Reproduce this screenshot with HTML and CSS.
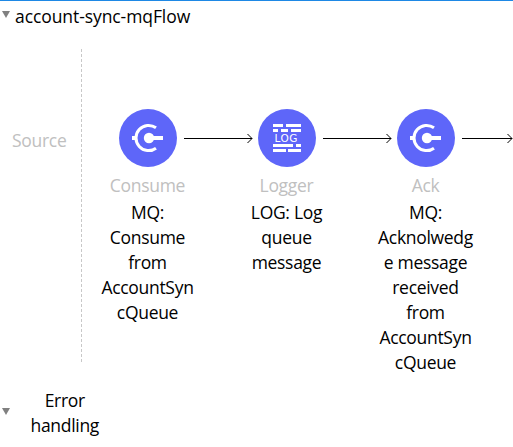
FILE: index.html
```html
<!DOCTYPE html>
<html lang="en">
<head>
<meta charset="utf-8">
<title>account-sync-mqFlow</title>
<link rel="stylesheet" href="styles.css">
</head>
<body>
<svg width="0" height="0" class="defs" aria-hidden="true">
  <symbol id="mq" viewBox="0 0 58 58">
    <circle cx="29" cy="29" r="29" fill="#5e66f9"/>
    <path d="M37 18.8A12.6 12.6 0 1 0 37 39.2" fill="none" stroke="#fff" stroke-width="3"/>
    <circle cx="30" cy="29" r="5.2" fill="#fff"/>
    <path d="M13 27h5v4h-5zM30 27h14v4H30z" fill="#fff"/>
  </symbol>
  <symbol id="arrow" viewBox="0 0 69 12">
    <path d="M0 6.5H68M63.5 2L68 6.5L63.5 11" fill="none" stroke="#000" stroke-width="1"/>
  </symbol>
</svg>
<main class="canvas">
  <header class="flow-head"><span class="caret"></span><h1>account-sync-mqFlow</h1></header>
  <section class="flow">
    <div class="source">Source</div>
    <div class="steps">
      <article class="step">
        <svg class="icon"><use href="#mq"/></svg>
        <h2>Consume</h2>
        <p><span>MQ:</span><span>Consume</span><span>from</span><span>AccountSyn</span><span>cQueue</span></p>
      </article>
      <svg class="arrow"><use href="#arrow"/></svg>
      <article class="step">
        <svg class="icon" viewBox="0 0 58 58">
          <circle cx="29" cy="29" r="29" fill="#5e66f9"/>
          <path d="M15 15h10v3H15zM28 15h15v3H28zM15 20h5v3h-5zM23 20h7v3h-7zM33 20h10v3H33zM15 35h20v3H15zM38 35h5v3h-5zM15 40h13v3H15zM30 40h13v3H30z" fill="#fff"/>
          <text x="16.500" y="33" class="log">LOG</text>
        </svg>
        <h2>Logger</h2>
        <p><span>LOG: Log</span><span>queue</span><span>message</span></p>
      </article>
      <svg class="arrow"><use href="#arrow"/></svg>
      <article class="step">
        <svg class="icon"><use href="#mq"/></svg>
        <h2>Ack</h2>
        <p><span>MQ:</span><span>Acknolwedg</span><span>e message</span><span>received</span><span>from</span><span>AccountSyn</span><span>cQueue</span></p>
      </article>
      <svg class="arrow last" viewBox="0 0 51 12"><path d="M0 6.5H50M45.5 2L50 6.5L45.5 11" fill="none" stroke="#000"/></svg>
    </div>
  </section>
  <footer class="errors"><span class="caret"></span><div>Error<br>handling</div></footer>
</main>
</body>
</html>
```
FILE: styles.css
```css
* { box-sizing: border-box; }
body { margin: 0; background: #fff; color: #000; font: 17.5px/25px "Open Sans", "Noto Sans", sans-serif; letter-spacing: -0.3px; overflow: hidden; }
h1, h2, p { margin: 0; font: inherit; }
.defs { position: absolute; }
.canvas { width: 513px; height: 447px; border-top: 1px solid #1e88e5; display: flex; flex-direction: column; overflow: hidden; }
.caret { width: 8px; height: 7px; background: #808080; clip-path: polygon(0 0, 100% 0, 50% 100%); flex: none; }
.flow-head { height: 48px; padding: 3px 0 0 2px; display: flex; gap: 5px; letter-spacing: -0.08px; }
.flow-head .caret { margin-top: 7px; }
.flow { height: 313px; display: flex; }
.source { width: 82px; padding: 79px 0 0 12px; color: #c0c0c0; background: repeating-linear-gradient(to bottom, #c8c8c8 0 3px, transparent 3px 5px) right / 1px 100% no-repeat; }
.steps { display: flex; align-items: flex-start; padding: 60px 0 0 16px; }
.step { width: 100px; text-align: center; flex: none; }
.icon { display: block; width: 58px; height: 58px; margin: 0 auto; }
.step h2 { color: #c0c0c0; margin: 6px 1px 0 0; height: 27px; }
.step p { display: flex; flex-direction: column; white-space: nowrap; align-items: center; margin-right: 1px; }
.arrow { width: 69px; height: 12px; margin: 23px -16px 0 -14px; flex: none; }
.arrow.last { width: 51px; margin-right: 0; }
.log { font: 10.5px "DejaVu Sans", sans-serif; letter-spacing: 0.5px; fill: #fff; }
.errors { display: flex; align-items: flex-start; padding: 26px 0 0 2px; text-align: center; gap: 20.5px; letter-spacing: -0.3px; }
.errors .caret { margin-top: 20px; }
```
